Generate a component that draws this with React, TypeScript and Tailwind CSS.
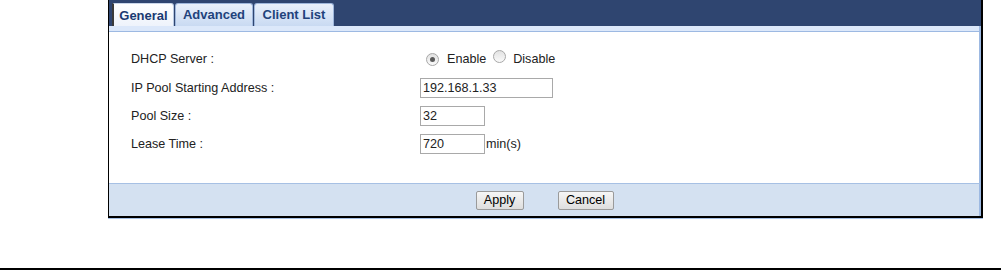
import React from "react";

function Radio({ checked }: { checked?: boolean }) {
  return (
    <span className="inline-flex w-[13px] h-[13px] rounded-full border border-[#a8a8a8] bg-gradient-to-b from-[#e2e2e2] to-[#fafafa] items-center justify-center">
      {checked && <span className="w-[5px] h-[5px] rounded-full bg-[#5a5a5a]" />}
    </span>
  );
}

export default function App() {
  const font = { fontFamily: '"Liberation Sans", Arial, sans-serif' };
  return (
    <div className="w-[1008px] h-[271px] bg-white relative" style={font}>
      <div className="ml-[108px] w-[875px] border-l border-black border-r-2 border-r-black border-b-2 border-b-black flex flex-col">
        {/* header */}
        <div className="h-[26px] bg-[#2f4570] flex items-end pl-[3px] gap-[1px]">
          <div className="h-[23px] w-[62px] bg-gradient-to-b from-[#ffffff] to-[#eef3fb] border-l-2 border-l-[#3a3a3a] border-t border-t-[#c9d6ea] border-r border-r-[#b7c8e2] rounded-tr-[3px] flex items-center justify-center text-[13px] font-bold text-[#1a3a72] pt-[2px]">
            General
          </div>
          <div className="h-[23px] w-[78px] bg-gradient-to-b from-[#e9f0fb] to-[#c9daf2] border border-[#9fb7dc] border-b-0 rounded-t-[3px] flex items-start justify-center text-[13px] font-bold text-[#21427c] pt-[1px]">
            Advanced
          </div>
          <div className="h-[23px] w-[80px] bg-gradient-to-b from-[#e9f0fb] to-[#c9daf2] border border-[#9fb7dc] border-b-0 rounded-t-[3px] flex items-start justify-center text-[13px] font-bold text-[#21427c] pt-[1px]">
            Client List
          </div>
        </div>
        <div className="h-[6px] bg-[#dce8fa] border-b border-b-[#9db9e2] border-r-2 border-r-[#9db9e2]" />
        {/* content */}
        <div className="h-[151px] bg-white border-r-2 border-r-[#9db9e2] pt-[18px] text-[12.6px] text-[#222]">
          <div className="flex items-center h-[19px]">
            <div className="w-[311px] pl-[22px]">DHCP Server :</div>
            <div className="flex items-center pl-[6px]">
              <Radio checked />
              <span className="ml-[8px]">Enable</span>
              <span className="ml-[7px]"><Radio /></span>
              <span className="ml-[7px]">Disable</span>
            </div>
          </div>
          <div className="flex items-center h-[20px] mt-[9px]">
            <div className="w-[311px] pl-[22px]">IP Pool Starting Address :</div>
            <div className="w-[133px] h-[20px] border border-[#a9a9a9] flex items-center pl-[2px]">192.168.1.33</div>
          </div>
          <div className="flex items-center h-[20px] mt-[8px]">
            <div className="w-[311px] pl-[22px]">Pool Size :</div>
            <div className="w-[65px] h-[20px] border border-[#a9a9a9] flex items-center pl-[2px]">32</div>
          </div>
          <div className="flex items-center h-[20px] mt-[8px]">
            <div className="w-[311px] pl-[22px]">Lease Time :</div>
            <div className="w-[65px] h-[20px] border border-[#a9a9a9] flex items-center pl-[2px]">720</div>
            <span className="ml-[1px]">min(s)</span>
          </div>
        </div>
        {/* footer */}
        <div className="h-[33px] bg-[#d4e1f1] border-t border-t-[#a6c0e4] border-r-2 border-r-[#9db9e2] flex items-center justify-center gap-[34px] pl-[1px]">
          <button className="w-[48px] h-[19px] border border-[#9a9a9a] rounded-[2px] bg-gradient-to-b from-[#f6f6f6] to-[#dedede] text-[12.6px] text-black flex items-center justify-center">Apply</button>
          <button className="w-[56px] h-[19px] border border-[#9a9a9a] rounded-[2px] bg-gradient-to-b from-[#f6f6f6] to-[#dedede] text-[12.6px] text-black flex items-center justify-center">Cancel</button>
        </div>
      </div>
      <div className="ml-[108px] w-[875px] h-[1px] bg-[#a6c0e4]" />
      <div className="absolute left-0 top-[268px] w-[1001px] h-[2px] bg-black" />
    </div>
  );
}
